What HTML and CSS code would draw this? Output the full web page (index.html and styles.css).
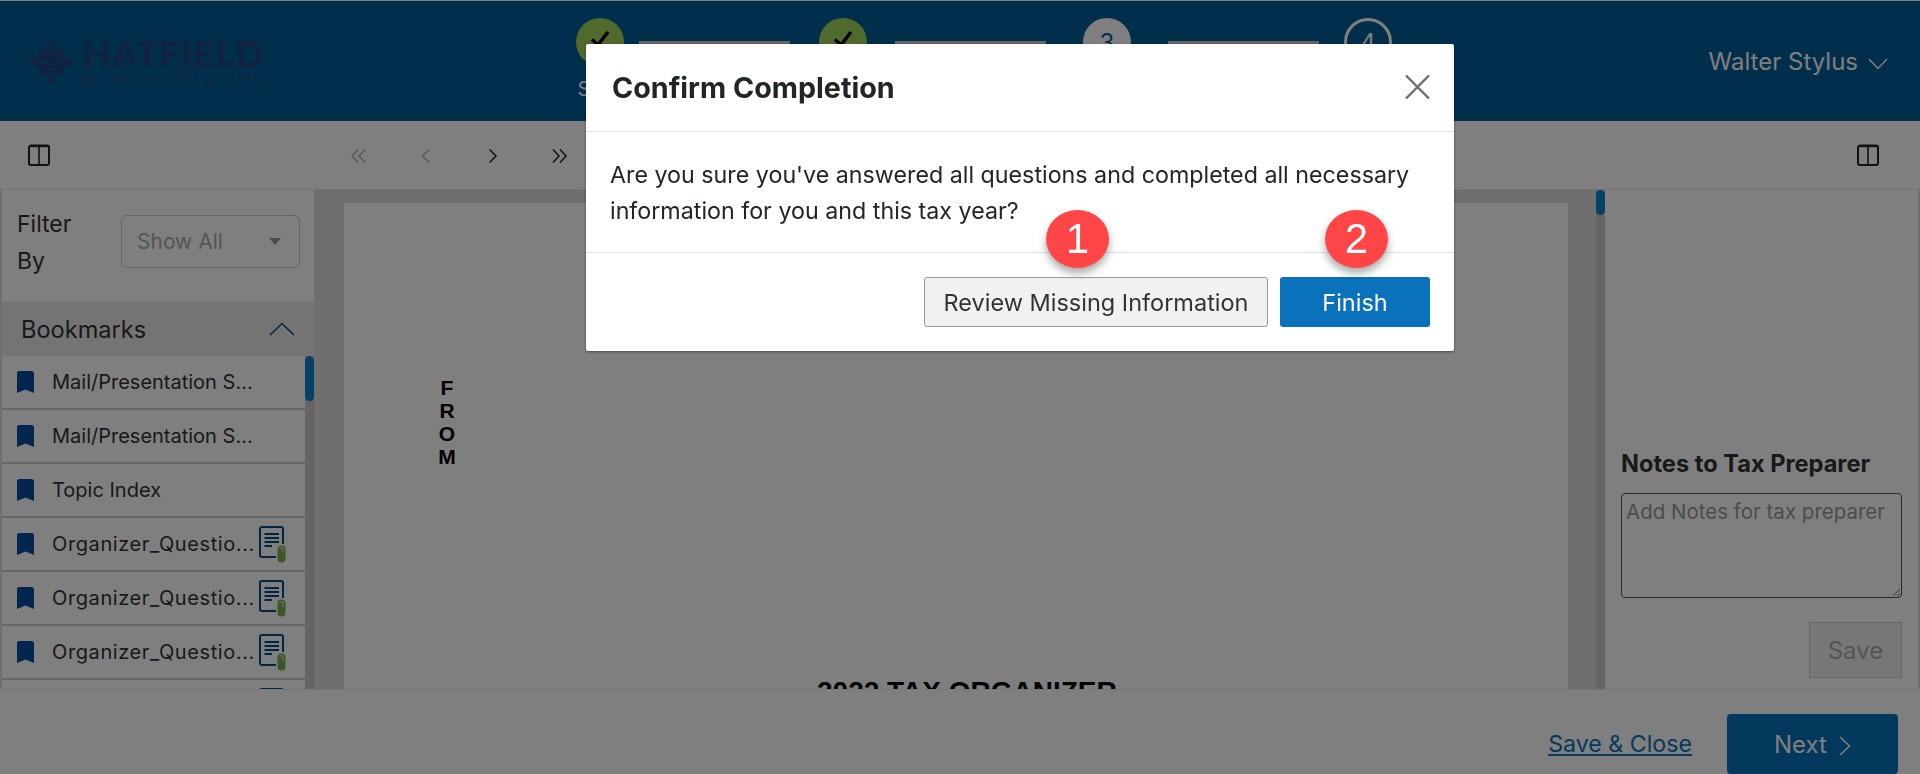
FILE: index.html
```html
<!DOCTYPE html>
<html lang="en">
<head>
<meta charset="utf-8">
<title>Confirm Completion</title>
<link rel="stylesheet" href="styles.css">
</head>
<body>
<svg class="defs" width="0" height="0" aria-hidden="true">
  <symbol id="panel" viewBox="0 0 22 22"><path d="M1 3.500A2 2 0 0 1 3 1.500H19A2 2 0 0 1 21 3.500V19A2 2 0 0 1 19 21H3A2 2 0 0 1 1 19Z" fill="none" stroke="currentColor" stroke-width="2"/><path d="M11 2V20" stroke="currentColor" stroke-width="1.600"/><path d="M1.500 2.200H20.500" stroke="currentColor" stroke-width="2"/></symbol>
  <symbol id="mark" viewBox="0 0 17 22"><path d="M0 2.500A2.500 2.500 0 0 1 2.500 0H14.500A2.500 2.500 0 0 1 17 2.500V22L8.500 18.500L0 22Z" fill="currentColor"/></symbol>
  <symbol id="doc" viewBox="0 0 27 37"><path d="M24 18V3A2 2 0 0 0 22 1H3A2 2 0 0 0 1 3V29A2 2 0 0 0 3 31H17" fill="none" stroke="#054c82" stroke-width="2"/><path d="M5.500 8H20M5.500 12H20M5.500 16H20M5.500 20H13" stroke="#054c82" stroke-width="1.800"/><path d="M18.500 23.500A4 4 0 0 1 26.500 23.500V32.500A4 4 0 0 1 18.500 32.500Z" fill="#78ac4c"/><path d="M21 23A1.500 1.500 0 0 1 24 23V27" fill="none" stroke="#c4d6b4" stroke-width="1.600"/></symbol>
  <symbol id="dbl-left" viewBox="0 0 15 14"><path d="M7 .5L1 7L7 13.500M14 .5L8 7L14 13.500" fill="none" stroke="currentColor" stroke-width="1.500"/></symbol>
  <symbol id="left" viewBox="0 0 15 14"><path d="M11 .5L4.500 7L11 13.500" fill="none" stroke="currentColor" stroke-width="1.500"/></symbol>
  <symbol id="right" viewBox="0 0 15 14"><path d="M4.500 .5L11 7L4.500 13.500" fill="none" stroke="currentColor" stroke-width="1.500"/></symbol>
  <symbol id="dbl-right" viewBox="0 0 15 14"><path d="M1 .5L7 7L1 13.500M8 .5L14 7L8 13.500" fill="none" stroke="currentColor" stroke-width="1.500"/></symbol>
</svg>

<header class="topbar">
  <div class="logo">
    <svg class="logo-mark" viewBox="0 0 42 42" aria-hidden="true">
      <g fill="none" stroke="#1e4682" stroke-width="3.500" stroke-linecap="round">
        <path d="M21 4V12M13 12H29M4 21C10 21 11 17 15 17H27C31 17 32 21 38 21M4 21C10 21 11 25 15 25H27C31 25 32 21 38 21M13 30H29M21 30V38M13 12L7 20M29 12L35 20M13 30L7 22M29 30L35 22"/>
      </g>
      <g fill="#1e4682">
        <circle cx="21" cy="4" r="4"/><circle cx="21" cy="38" r="4"/><circle cx="4" cy="21" r="4"/><circle cx="38" cy="21" r="4"/>
        <circle cx="13" cy="12" r="4"/><circle cx="29" cy="12" r="4"/><circle cx="13" cy="30" r="4"/><circle cx="29" cy="30" r="4"/>
        <circle cx="21" cy="21" r="3.500"/>
      </g>
    </svg>
    <div class="logo-text">
      <div class="logo-name">HATFIELD</div>
      <div class="logo-sub">&amp; ASSOCIATES</div>
    </div>
  </div>
  <ol class="stepper">
    <li class="step step-a"><span class="dot dot-done"><svg viewBox="0 0 24 24" class="tick"><path d="M4 12.500L10 18L20 5" fill="none" stroke="currentColor" stroke-width="3.500"/></svg></span><span class="step-label">Start</span></li>
    <li class="bar"></li>
    <li class="step step-b"><span class="dot dot-done"><svg viewBox="0 0 24 24" class="tick"><path d="M4 12.500L10 18L20 5" fill="none" stroke="currentColor" stroke-width="3.500"/></svg></span><span class="step-label">Organizer</span></li>
    <li class="bar"></li>
    <li class="step step-c"><span class="dot dot-now">3</span><span class="step-label">Review</span></li>
    <li class="bar"></li>
    <li class="step step-d"><span class="dot dot-next">4</span><span class="step-label">Submit</span></li>
  </ol>
  <div class="user">Walter Stylus <svg class="user-chev" viewBox="0 0 20 12"><path d="M1 1L10 10.500L19 1" fill="none" stroke="currentColor" stroke-width="1.500"/></svg></div>
</header>

<nav class="toolbar">
  <svg class="panel-icon"><use href="#panel"/></svg>
  <div class="pager">
    <svg class="pg pg-off"><use href="#dbl-left"/></svg>
    <svg class="pg pg-off"><use href="#left"/></svg>
    <svg class="pg"><use href="#right"/></svg>
    <svg class="pg"><use href="#dbl-right"/></svg>
  </div>
  <svg class="panel-icon"><use href="#panel"/></svg>
</nav>

<main class="workspace">
  <aside class="side">
    <div class="filter">
      <label class="filter-label">Filter<br>By</label>
      <div class="select">Show All<span class="caret"></span></div>
    </div>
    <div class="bm-head">Bookmarks <svg class="bm-chev" viewBox="0 0 26 14"><path d="M1 13L13 1.500L25 13" fill="none" stroke="currentColor" stroke-width="1.600"/></svg></div>
    <div class="bm-body">
      <ul class="bm-list">
        <li class="bm"><svg class="bm-icon"><use href="#mark"/></svg><span class="bm-text">Mail/Presentation S...</span></li>
        <li class="bm"><svg class="bm-icon"><use href="#mark"/></svg><span class="bm-text">Mail/Presentation S...</span></li>
        <li class="bm"><svg class="bm-icon"><use href="#mark"/></svg><span class="bm-text">Topic Index</span></li>
        <li class="bm"><svg class="bm-icon"><use href="#mark"/></svg><span class="bm-text bm-text-wide">Organizer_Questio...</span><svg class="bm-doc"><use href="#doc"/></svg></li>
        <li class="bm"><svg class="bm-icon"><use href="#mark"/></svg><span class="bm-text bm-text-wide">Organizer_Questio...</span><svg class="bm-doc"><use href="#doc"/></svg></li>
        <li class="bm"><svg class="bm-icon"><use href="#mark"/></svg><span class="bm-text bm-text-wide">Organizer_Questio...</span><svg class="bm-doc"><use href="#doc"/></svg></li>
        <li class="bm bm-last"><svg class="bm-doc"><use href="#doc"/></svg></li>
      </ul>
      <div class="scroll scroll-side"><div class="thumb thumb-side"></div></div>
    </div>
  </aside>
  <section class="viewer">
    <div class="sheet">
      <div class="from">F<br>R<br>O<br>M</div>
      <div class="doc-title">2022 TAX ORGANIZER</div>
    </div>
  </section>
  <div class="scroll scroll-main"><div class="thumb thumb-main"></div></div>
  <aside class="notes">
    <h2 class="notes-title">Notes to Tax Preparer</h2>
    <textarea class="notes-input" placeholder="Add Notes for tax preparer"></textarea>
    <button class="notes-save" type="button">Save</button>
  </aside>
</main>

<footer class="foot">
  <a class="save-close" href="#">Save &amp; Close</a>
  <button class="next" type="button">Next <svg class="next-chev" viewBox="0 0 12 20"><path d="M1 1L10.500 10L1 19" fill="none" stroke="currentColor" stroke-width="1.500"/></svg></button>
</footer>

<div class="backdrop"></div>
<div class="modal" role="dialog" aria-labelledby="modal-title">
  <div class="modal-head">
    <h1 class="modal-title" id="modal-title">Confirm Completion</h1>
    <svg class="modal-close" viewBox="0 0 25 24"><path d="M1 .5L24 23.500M24 .5L1 23.500" fill="none" stroke="currentColor" stroke-width="2.400"/></svg>
  </div>
  <div class="modal-body">Are you sure you've answered all questions and completed all necessary information for you and this tax year?</div>
  <div class="modal-foot">
    <button class="btn btn-light" type="button">Review Missing Information</button>
    <button class="btn btn-blue" type="button">Finish</button>
  </div>
  <span class="badge badge-one">1</span>
  <span class="badge badge-two">2</span>
</div>
</body>
</html>
```
FILE: styles.css
```css
* { box-sizing: border-box; }
html, body { margin: 0; height: 100%; }
body {
  height: 774px;
  overflow: hidden;
  display: flex;
  flex-direction: column;
  background: #fff;
  color: #333;
  font-family: "Inter", "Noto Sans", sans-serif;
  font-size: 20px;
}
.defs { position: absolute; }
ul, ol { list-style: none; margin: 0; padding: 0; }

/* header */
.topbar {
  flex: 0 0 121px;
  border-top: 1px solid #fff;
  background: #035c97;
  display: flex;
  align-items: flex-start;
}
.logo { display: flex; gap: 11px; margin: 39px 0 0 30px; width: 233px; flex: none; }
.logo-mark { width: 42px; height: 42px; flex: none; margin-top: 1px; }
.logo-text { color: #1e4682; }
.logo-name { font: 900 36px/26px "Lato", sans-serif; letter-spacing: 1.400px; }
.logo-sub { font: 400 15px/14px "Lato", sans-serif; letter-spacing: 7px; white-space: nowrap; margin-top: 6px; }
.stepper { display: flex; margin-left: 298px; }
.step { display: flex; flex-direction: column; align-items: center; padding-top: 17px; }
.step-a { width: 78px; }
.step-b { width: 105px; }
.step-c { width: 122px; }
.step-d { width: 98px; }
.bar { width: 151px; height: 5px; margin-top: 40px; background: #ccc; }
.dot {
  width: 48px; height: 48px; border-radius: 50%;
  display: flex; align-items: center; justify-content: center;
  font-size: 24px; flex: none;
}
.dot-done { background: #9ed458; color: #000; }
.dot-now { background: #fff; color: #035c97; }
.dot-next { border: 3px solid #fff; color: #fff; }
.tick { width: 24px; height: 24px; margin-top: -6px; }
.step-label { color: #fff; font-size: 20px; margin-top: 11px; }
.user { margin-left: auto; margin-top: 47px; margin-right: 32px; display: flex; align-items: center; gap: 10px; color: #fff; font-size: 24px; line-height: 28px; }
.user-chev { width: 20px; height: 12px; margin-top: 4px; }

/* toolbar */
.toolbar {
  flex: 0 0 69px;
  display: flex;
  align-items: center;
  padding: 0 41px 0 28px;
  background: #fff;
  border-bottom: 1px solid #e6e6e6;
  color: #333;
}
.panel-icon { width: 22px; height: 22px; flex: none; color: #222; }
.pager { display: flex; gap: 52px; margin: 1px auto 0 301px; }
.pg { width: 15px; height: 14px; color: #222; flex: none; }
.pg-off { color: #b0b0b0; }

/* main */
.workspace { flex: 0 0 499px; display: flex; overflow: hidden; background: #dedede; }
.side { flex: 0 0 312px; margin-left: 2px; background: #fff; display: flex; flex-direction: column; overflow: hidden; }
.filter { flex: 0 0 112px; display: flex; align-items: flex-start; padding: 16px 14px 0 15px; }
.filter-label { flex: 0 0 104px; font-size: 23px; line-height: 37px; color: #333; }
.select { flex: 1; height: 53px; margin-top: 9px; border: 1px solid #c8c8c8; border-radius: 6px; padding: 0 15px; display: flex; align-items: center; justify-content: space-between; color: #aaa; font-size: 21px; }
.caret { width: 0; height: 0; border: 6px solid transparent; border-top: 7px solid #999; border-bottom: 0; margin-right: 3px; }
.bm-head { flex: 0 0 54px; background: #e9e9e9; display: flex; align-items: center; justify-content: space-between; padding: 0 19px 0 19px; font-size: 23.600px; color: #333; }
.bm-chev { width: 26px; height: 14px; color: #054c82; }
.bm-body { flex: 1; display: flex; overflow: hidden; }
.bm-list { flex: 1; min-width: 0; }
.bm { height: 54px; display: flex; align-items: center; border-bottom: 2px solid #ccc; padding: 0 0 0 15px; }
.bm-last { justify-content: flex-end; }
.bm-icon { width: 17px; height: 22px; color: #044c9a; flex: none; margin-right: 18px; }
.bm-text { font-size: 20px; white-space: nowrap; color: #333; flex: 1; min-width: 0; }
.bm-text-wide { letter-spacing: .6px; }
.bm-doc { width: 27px; height: 37px; flex: none; margin-right: 19px; }
.scroll { flex: none; width: 9px; background: #cacaca; }
.scroll-main { margin-left: 28px; }
.thumb { width: 9px; border-radius: 5px; background: #0880d0; }
.thumb-side { height: 45px; }
.thumb-main { height: 25px; }
.viewer { flex: 0 0 1254px; padding: 13px 0 0 30px; overflow: hidden; }
.sheet { width: 1224px; height: 700px; background: #fff; color: #000; font-family: "Liberation Sans", sans-serif; font-weight: 700; padding-top: 174px; }
.from { font-size: 21px; line-height: 23px; width: 206px; text-align: center; margin-top: -1px; }
.doc-title { font-size: 28px; line-height: 28px; margin-top: 210px; margin-left: 473px; white-space: nowrap; }
.notes { flex: 1; margin-right: 2px; background: #fff; padding: 260px 16px 0 16px; display: flex; flex-direction: column; align-items: stretch; }
.notes-title { margin: 0; font-size: 23.600px; line-height: 28px; font-weight: 700; color: #333; white-space: nowrap; }
.notes-input { height: 105px; margin-top: 15px; border: 1px solid #555; border-radius: 4px; padding: 4px; font: 400 20.500px/28px "Inter", sans-serif; color: #333; resize: both; width: 100%; }
.notes-input::placeholder { color: #999; }
.notes-save { align-self: flex-end; width: 93px; height: 56px; margin-top: 24px; border: 1px solid #ccc; background: #efefef; color: #aaa; font: 400 24px "Inter", sans-serif; }

/* footer */
.foot { flex: 1; display: flex; justify-content: flex-end; align-items: flex-start; padding: 24px 22px 0 0; background: #fff; border-top: 1px solid #eee; }
.save-close { color: #0a72ba; font-size: 23.200px; margin-top: 16px; margin-right: 35px; }
.next { width: 171px; height: 60px; background: #0472ba; border: 0; border-radius: 4px; color: #fff; font: 400 24px "Inter", sans-serif; display: flex; align-items: center; justify-content: center; gap: 12px; }
.next-chev { width: 12px; height: 20px; margin-top: 3px; }

/* modal */
.backdrop { position: fixed; inset: 0; background: rgba(0, 0, 0, .5); }
.modal { position: fixed; left: 586px; top: 44px; width: 868px; height: 307px; background: #fff; border-radius: 2px; color: #333; display: flex; flex-direction: column; box-shadow: 0 1px 3px rgba(0,0,0,.4); }
.modal-head { flex: 0 0 88px; display: flex; align-items: center; justify-content: space-between; padding: 0 24px 0 26px; border-bottom: 1px solid #dee2e6; }
.modal-title { margin: 0; font-size: 28.700px; font-weight: 700; color: #212529; }
.modal-close { width: 25px; height: 24px; color: #6f6f6f; margin-top: -1px; }
.modal-body { flex: 0 0 121px; padding: 25px 30px 0 24px; font-size: 23.250px; line-height: 36px; color: #212529; border-bottom: 1px solid #dee2e6; }
.modal-foot { flex: 1; display: flex; justify-content: flex-end; align-items: flex-start; gap: 12px; padding: 24px 24px 0; }
.btn { height: 50px; border-radius: 3px; font: 400 23.500px "Inter", sans-serif; color: #333; }
.btn-light { width: 344px; background: #f0f1f1; border: 1px solid #9a9a9a; }
.btn-blue { width: 150px; background: #0a72ba; border: 0; color: #fff; }
.badge { position: absolute; top: 166px; width: 63px; height: 58px; border-radius: 50%; background: #ff4545; color: #fff; display: flex; align-items: center; justify-content: center; font: 400 42px "Liberation Sans", sans-serif; box-shadow: 0 5px 8px rgba(0,0,0,.35); }
.badge-one { left: 460px; }
.badge-two { left: 739px; }
```
